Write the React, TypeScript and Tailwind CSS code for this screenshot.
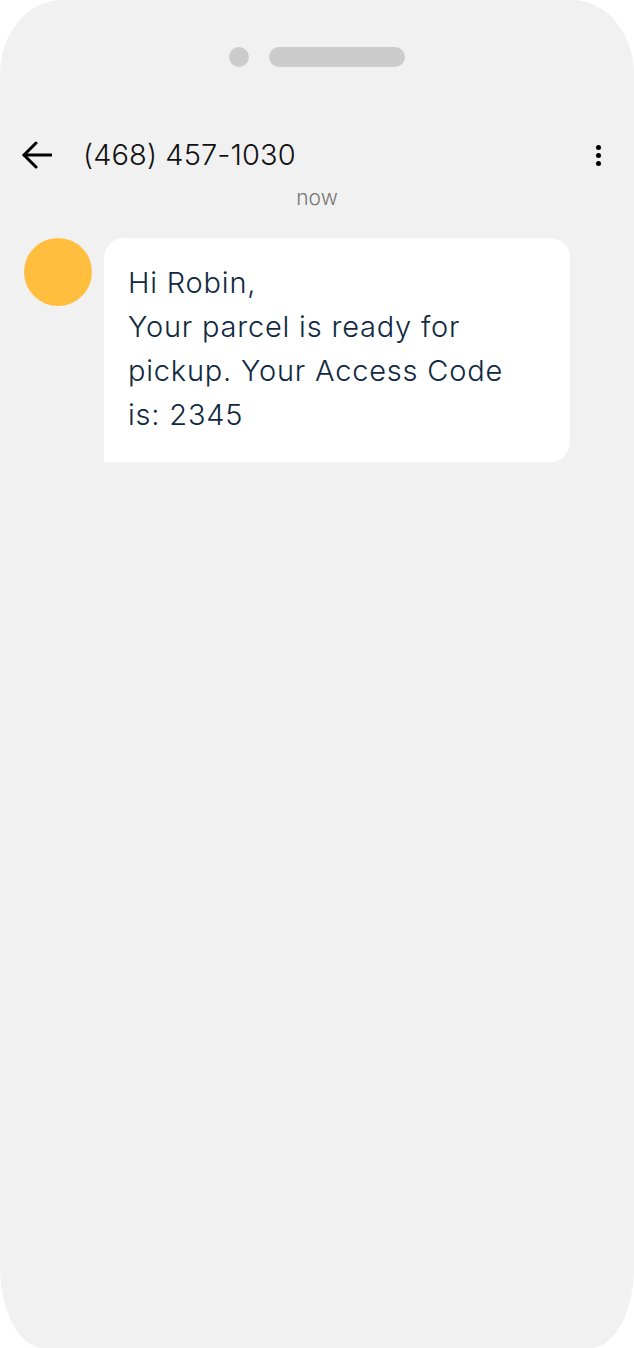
import React from "react";

export default function App() {
  return (
    <div className="w-[634px] h-[1348px] bg-white">
      <div
        className="w-[634px] h-[1348px] bg-[#f1f1f1] rounded-[62px_62px_44px_44px/74px_74px_80px_80px] flex flex-col"
        style={{ fontFamily: "Inter, 'Noto Sans', sans-serif" }}
      >
        <div className="pt-[47px] flex justify-center items-center gap-[20px]">
          <div className="w-[20px] h-[20px] rounded-full bg-[#cccccc]" />
          <div className="w-[136px] h-[20px] rounded-full bg-[#cccccc]" />
        </div>

        <div className="mt-[73px] h-[30px] flex items-center pl-[22px] pr-[33px]">
          <svg width="30" height="28" viewBox="0 0 30 28" fill="none" stroke="#000" strokeWidth="3" strokeLinecap="round" strokeLinejoin="round">
            <path d="M2 14H29" />
            <path d="M14 2L2 14L14 26" />
          </svg>
          <div className="ml-[31px] text-[29px] leading-[30px] font-light text-[#111] tracking-[0.1px]">(468) 457-1030</div>
          <div className="ml-auto flex flex-col items-center gap-[3px]">
            <div className="w-[5px] h-[5px] rounded-full bg-black" />
            <div className="w-[5px] h-[5px] rounded-full bg-black" />
            <div className="w-[5px] h-[5px] rounded-full bg-black" />
          </div>
        </div>

        <div className="mt-[18px] text-center text-[21px] leading-[20px] font-light text-[#777777]">now</div>

        <div className="mt-[30px] flex items-start pl-[24px] gap-[12px]">
          <div className="w-[68px] h-[68px] rounded-full bg-[#ffbe3e] shrink-0" />
          <div className="w-[466px] h-[224px] bg-white rounded-[20px] rounded-bl-none pl-[24px] pr-[10px] pt-[23px] text-[29px] leading-[44px] font-light text-[#10293f] tracking-[0.8px]">
            Hi Robin,
            <br />
            Your parcel is ready for
            <br />
            pickup. Your Access Code
            <br />
            is: 2345
          </div>
        </div>
      </div>
    </div>
  );
}
